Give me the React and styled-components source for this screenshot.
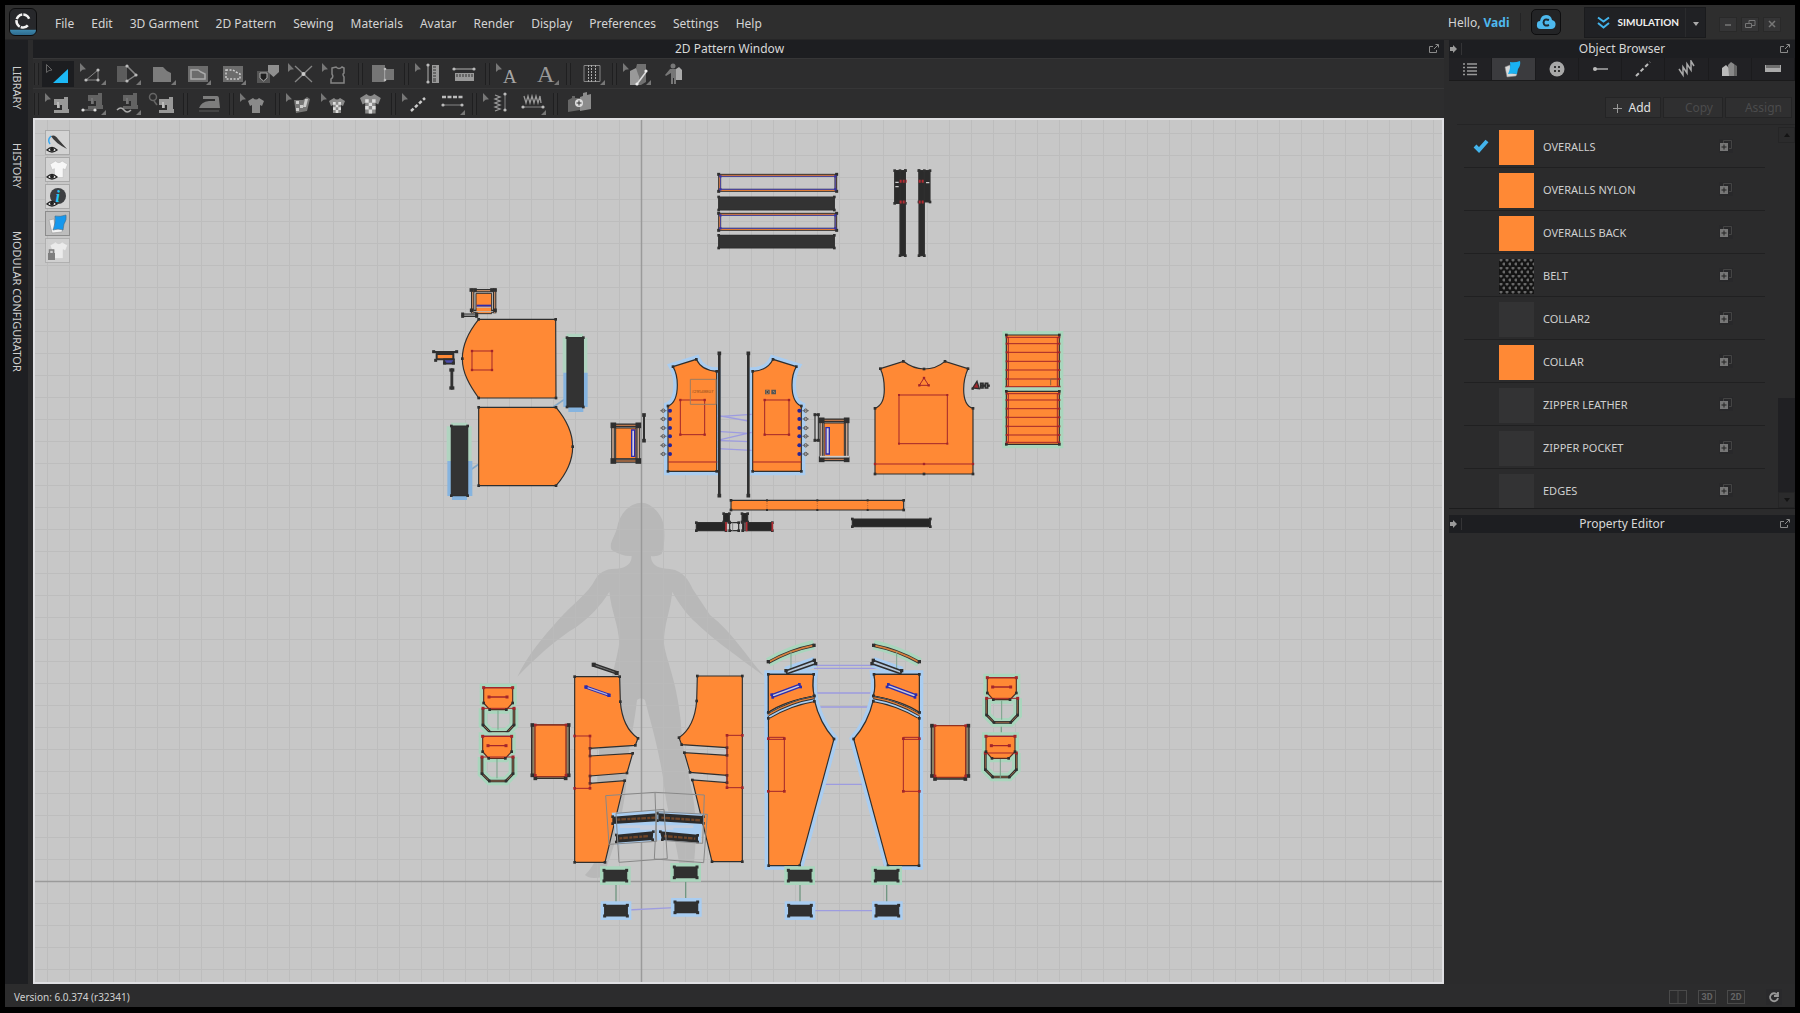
import React from "react";
import styled, { createGlobalStyle } from "styled-components";

const GlobalStyle = createGlobalStyle`
  * { box-sizing: border-box; }
  body { margin: 0; background: #000; }
  button { font: inherit; color: inherit; border: 0; padding: 0; background: none; }
  ul { list-style: none; margin: 0; padding: 0; }
`;

const Shell = styled.div`
  height: 100vh;
  min-height: 600px;
  padding: 5px 5px 6px;
  display: flex;
  flex-direction: column;
  background: #000;
  color: #d4d4d4;
  font: 12px/16px "Noto Sans", "Open Sans", sans-serif;
`;

const TopBar = styled.header`
  flex: 0 0 35px;
  display: flex;
  align-items: center;
  padding: 0 14px 0 4px;
  background: #2e2e2e;
  border-bottom: 1px solid #262627;
`;
const Logo = styled.div`
  width: 28px;
  height: 28px;
  border-radius: 6px;
  border: 1px solid #0c0c0d;
  background: linear-gradient(#27282b 78%, #3c86ab 82%, #2e6a8c);
  svg { display: block; }
`;
const Menu = styled.nav`
  display: flex;
  gap: 17px;
  margin-left: 18px;
  padding-top: 4px;
  button { white-space: nowrap; }
`;
const Greeting = styled.div`
  margin-left: auto;
  padding: 2px 11px 0 0;
  border-right: 1px solid #232324;
  b { color: #4fb9ee; }
`;
const CloudButton = styled.button`
  width: 30px;
  height: 26px;
  margin: 0 23px 0 10px;
  border: 1px solid #0e0e0f;
  border-radius: 5px;
  background: #232426;
  svg { display: block; margin: auto; }
`;
const Mode = styled.div`
  display: flex;
  height: 31px;
  margin-right: 13px;
  background: #202124;
  border: 1px solid #1a1b1d;
  font: 700 10px/16px Lato, sans-serif;
  color: #f0f0f0;
`;
const ModeButton = styled.button`
  display: flex;
  align-items: center;
  gap: 7px;
  padding: 0 6px 0 12px;
`;
const CaretButton = styled.button`
  width: 20px;
  border-left: 1px solid #2a2b2d;
`;
const WindowButtons = styled.div`
  display: flex;
  gap: 4px;
  margin-top: 4px;
`;
const WindowButton = styled.button`
  width: 18px;
  height: 15px;
  background: #353536;
  border: 1px solid #292929;
  svg { display: block; margin: auto; }
`;

const Main = styled.div`
  flex: 1;
  min-height: 0;
  display: grid;
  grid-template-columns: 23px minmax(0, 1fr) 346px;
  column-gap: 5px;
  background: #2b2b2c;
`;
const Rail = styled.aside`
  display: flex;
  flex-direction: column;
  align-items: center;
  background: #1e1f22;
  font-size: 11px;
  padding-top: 26px;
  gap: 33px;
  button { writing-mode: vertical-rl; white-space: nowrap; color: #cfcfcf; }
  button:last-child { margin-top: 10px; }
`;

const Column = styled.section`
  display: flex;
  flex-direction: column;
  min-width: 0;
  min-height: 0;
`;
const TitleBar = styled.div`
  flex: 0 0 18px;
  display: grid;
  grid-template-columns: 20px 1fr 16px;
  align-items: center;
  text-align: center;
  background: #1d1e21;
  color: #d8d8d8;
  h2 { margin: 0; padding-right: ${(p) => p.$shift || 4}px; font: inherit; }
  svg { display: block; }
`;
const ToolRow = styled.div`
  flex: 0 0 30px;
  display: flex;
  align-items: center;
  background: #2d2d2e;
  border-top: 1px solid #363637;
`;
const Divider = styled.i`
  width: 5px;
  height: 22px;
  margin: 0 ${(p) => (p.$edge ? 1 : 3)}px;
  border: 1px solid #1f1f20;
  border-width: 0 1px;
  background: #303031;
`;
const Tool = styled.button`
  width: 35px;
  height: 26px;
  display: flex;
  justify-content: center;
  align-items: center;
  svg { display: block; background: ${(p) => (p.$active ? "#1c1d20" : "none")}; }
`;

const Canvas = styled.div`
  flex: 1;
  min-height: 0;
  position: relative;
  overflow: hidden;
  border: 2px solid #dfdfe2;
  background: #c7c7c7;
  > svg { display: block; width: 100%; height: 100%; }
`;
const ViewTools = styled.div`
  position: absolute;
  left: 10px;
  top: 10px;
  display: grid;
  gap: 2px;
`;
const ViewTool = styled.button`
  width: 25px;
  height: 25px;
  background: ${(p) => (p.$on ? "#bdbdbd" : "#d3d3d3")};
  border: 1px solid ${(p) => (p.$on ? "#8c8c8c" : "#a9a9a9")};
  opacity: ${(p) => (p.$dim ? 0.75 : 1)};
  svg { display: block; }
`;

const Tabs = styled.div`
  flex: 0 0 23px;
  display: grid;
  grid-template-columns: repeat(8, 1fr);
  background: #212124;
  border-bottom: 1px solid #1a1a1b;
`;
const Tab = styled.button`
  display: flex;
  align-items: center;
  justify-content: center;
  border-right: 1px solid #1b1b1d;
  background: ${(p) => (p.$active ? "#3b3b3e" : "none")};
`;
const Actions = styled.div`
  flex: 0 0 44px;
  display: flex;
  justify-content: flex-end;
  gap: 2px;
  padding: 16px 3px 6px 0;
  margin-left: 8px;
  border-bottom: 1px solid #242425;
`;
const Action = styled.button`
  width: ${(p) => p.$w}px;
  display: flex;
  align-items: center;
  justify-content: flex-end;
  gap: 7px;
  padding: 1px ${(p) => p.$pad}px 0 0;
  border: 1px solid #242425;
  background: #2f2f30;
  color: #e2e2e2;
  &:disabled { color: #4b4b4c; }
`;
const Browser = styled.div`
  flex: 0 0 384px;
  display: flex;
  overflow: hidden;
  border-bottom: 1px solid #1c1c1d;
`;
const List = styled.ul`
  flex: 1;
  margin: 0 13px 0 15px;
`;
const Row = styled.li`
  height: 43px;
  display: grid;
  grid-template-columns: 35px 35px 1fr 46px;
  align-items: center;
  border-bottom: 1px solid #202021;
  font-size: 11px;
  color: #cfcfcf;
  > svg { margin-left: 9px; }
`;
const Swatch = styled.span`
  width: 35px;
  height: 35px;
  margin-top: 2px;
  background: ${(p) => p.$fill};
`;
const Name = styled.span`padding: 2px 0 0 9px;`;
const AddTo = styled.button`
  width: 14px;
  height: 14px;
  background: #28282a;
  svg { display: block; }
`;
const Scroll = styled.div`
  width: 17px;
  display: flex;
  flex-direction: column;
  padding: 2px 0 0;
  button { height: 16px; border: 1px solid #252526; }
  svg { display: block; margin: auto; }
`;
const Track = styled.div`
  flex: 1;
  display: flex;
  flex-direction: column;
  justify-content: flex-end;
`;
const Thumb = styled.div`
  height: 94px;
  background: #202023;
`;
const Gap = styled.div`flex: 0 0 6px;`;

const Status = styled.footer`
  flex: 0 0 23px;
  display: flex;
  align-items: center;
  gap: 11px;
  padding: 2px 13px 0 9px;
  background: #2c2c2d;
  font-size: 10px;
  color: #d0d0d0;
  span { margin-right: auto; }
`;
const StatusButton = styled.button`
  width: 18px;
  height: 14px;
  border: 1px solid #4a4a4a;
  font: 700 9px/12px Roboto, sans-serif;
  color: #666;
`;
const Refresh = styled.button`
  margin-left: 10px;
  width: 16px;
  height: 16px;
  background: #29292b;
  svg { display: block; margin: auto; }
`;

/* ---------- toolbar icons ---------- */

const G = "#858585";
const Cursor = ({ x = 3 }) => <path d={`M${x} 3v9l2.5-2.2 3.5-.6z`} fill="#777" />;
const More = () => <path d="M29 20v5h-5z" fill="#777" />;
const Dot = ({ x, y, r = 1.6, c = "#bbb" }) => <circle cx={x} cy={y} r={r} fill={c} />;
const Machine = ({ x = 0, y = 0, o = 1 }) => (
  <g transform={`translate(${x} ${y})`} opacity={o}>
    <path d="M0 2h10V0h4v12h1v4H0v-3h8V8H6v3H3V8H0z" fill="#999" />
    <path d="M4 5v6" stroke="#ddd" />
  </g>
);
const Shirt = ({ x = 0, y = 0, s = 1, check, fill = "#8a8a8a", ...rest }) => (
  <g transform={`translate(${x} ${y}) scale(${s})`}>
    <path d="M5 0Q8 3 11 0L16 3L14 8L12 7V15H4V7L2 8L0 3Z" fill={fill} {...rest} />
    {check && (
      <path d="M4 4h2.7v2.7H4zM9.3 4H12v2.7H9.3zM6.7 6.7h2.6v2.6H6.7zM4 9.3h2.7V12H4zM9.3 9.3H12V12H9.3zM6.7 12h2.6v3H6.7z" fill="#ddd" />
    )}
  </g>
);
const tools = {
  transform: <><path d="M4.500 4.500v8l2.500-2 3-.5z" fill="none" stroke="#666" /><path d="M26 9v14H11z" fill="#1cb8f5" /></>,
  edit: <><Cursor /><path d="M9 20L21 10V20Z" fill="none" stroke={G} /><Dot x={9} y={20} /><Dot x={21} y={10} /><Dot x={21} y={20} /><More /></>,
  polygon: <><path d="M5 6h10v16H5z" fill="#5c5c5c" /><path d="M15 6l9 9-9 6" stroke={G} fill="none" strokeWidth="1.500" /><Dot x={15} y={6} /><Dot x={24} y={15} /><Dot x={15} y={21} /><More /></>,
  shape: <><path d="M6 7h10l4 4 4 2v9H6z" fill="#7c7c7c" /><More /></>,
  inner: <><path d="M6 6h20v16H6z" fill="#6c6c6c" /><path d="M9 10h7l3 2 4 2v5H9z" fill="none" stroke="#aaa" strokeWidth="1.500" /><More /></>,
  dashed: <><path d="M6 6h20v16H6z" fill="#6c6c6c" /><path d="M9 10h7l3 2 4 2v5H9z" fill="none" stroke="#ccc" strokeWidth="1.500" strokeDasharray="2 1.500" /><More /></>,
  pocket: <><path d="M5 11h13v12H5z" fill="#555" /><path d="M8 13h7v5l-3.500 3L8 18z" fill="#1f1f1f" stroke="#aaa" /><path d="M16 5h11v7l-5.500 5L16 12z" fill="#8f8f8f" /></>,
  cut: <><Cursor x={1} /><path d="M8 6l17 16M25 6L8 22" stroke={G} strokeWidth="1.300" /><Dot x={16.5} y={14} r={2} c="#ccc" /></>,
  trace: <><Cursor x={0} /><path d="M10 8l4-1q3 3 6 0l2 1v5q-2 1 0 4v6H9v-4q3-2 1-5z" fill="none" stroke={G} strokeWidth="1.500" /></>,
  flatten: <><path d="M4 5h13v17H4zM18 9h8v11h-8z" fill="#757575" /><path d="M17 9v12" stroke="#ccc" /><Dot x={17} y={9} r={1.3} /><Dot x={17} y={20} r={1.3} /></>,
  measureV: <><Cursor x={1} /><path d="M14 6v16" stroke={G} strokeWidth="1.500" /><Dot x={14} y={5} /><Dot x={14} y={22} /><path d="M18 5h7v18h-7z" fill="#9a9a9a" /><path d="M19 7h3M19 10h3M19 13h3M19 16h3M19 19h3M19 21h3" stroke="#333" /></>,
  measureH: <><path d="M5 9h20" stroke={G} strokeWidth="1.500" /><Dot x={5} y={9} /><Dot x={25} y={9} /><path d="M6 13h19v8H6z" fill="#9a9a9a" /><path d="M8 14v3M11 14v3M14 14v3M17 14v3M20 14v3M23 14v3" stroke="#333" /></>,
  textEdit: <><Cursor x={1} /><text x="8" y="23" fontSize="19" fontFamily="Liberation Serif, serif" fill="#a5a5a5">A</text></>,
  text: <><text x="7" y="22" fontSize="24" fontFamily="Liberation Serif, serif" fill="#999">A</text><More /></>,
  pleat: <><path d="M8 5.500h16v16H8z" fill="none" stroke={G} /><path d="M12.500 5v17M15.500 5v17M19.500 5v17" stroke="#aaa" strokeDasharray="2 1" /><More /></>,
  fold: <><Cursor x={1} /><path d="M8 11l6-3 4 3v14H8z" fill="#999" /><path d="M14 8l1-4h9v18l-5 3h-4q4-6 1-11z" fill="#707070" /><path d="M15 24L24 12" stroke="#ddd" strokeWidth="1.500" /><Dot x={15} y={24} c="#eee" /><Dot x={24} y={11} c="#eee" /><More /></>,
  avatar: <><circle cx="16" cy="6" r="2.500" fill="#777" /><path d="M13 9h6l6 8-1 1-5-5v11h-2v-6h-1v6h-2V13l-5 3-1-1z" fill="#777" /><path d="M19 9l3-2 3 3v10h-6z" fill="#aaa" /></>,
  segment: <><Cursor /><Machine x={12} y={7} /></>,
  sewLine: <><Machine x={11} y={3} o={0.5} /><path d="M6 20h12" stroke={G} /><Dot x={6} y={20} c="#ddd" /><Dot x={18} y={20} c="#ddd" /><More /></>,
  sewFree: <><Machine x={11} y={3} o={0.5} /><path d="M5 20q4-4 7 0t7 0" stroke="#aaa" fill="none" strokeWidth="1.500" /><More /></>,
  sewCheck: <><circle cx="6" cy="7" r="3.500" fill="none" stroke="#666" strokeWidth="1.500" /><path d="M7 11l3 4" stroke="#666" strokeWidth="1.500" /><Machine x={12} y={7} /></>,
  iron: <><path d="M10 6h14q2 0 2 3l1 9H6q2-6 10-7h6v-2H10z" fill="#7d7d7d" /><path d="M6 20h20v2H6z" fill="#444" /></>,
  shirt: <><Cursor x={1} /><Shirt x={9} y={8} /></>,
  textureRoll: <><Cursor x={1} /><path d="M9 10h9l4-3 3 2-3 12-11 2z" fill="#777" /><path d="M11 11h3v3h-3zM15 15h3v3h-3zM11 18h3v3h-3zM20 9h3l-2 8h-3z" fill="#ccc" /></>,
  textureShirt: <><Cursor x={1} /><Shirt x={9} y={8} check /></>,
  textureBig: <Shirt x={5} y={4} s={1.3} check />,
  topEdit: <><Cursor x={1} /><path d="M10 21L24 8" stroke="#ccc" strokeWidth="2.500" strokeDasharray="3.500 2" /></>,
  topLine: <><path d="M6 7h22" stroke="#bbb" strokeWidth="2.500" strokeDasharray="4 1.500" /><path d="M7 15h19" stroke={G} /><Dot x={7} y={15} /><Dot x={26} y={15} /><More /></>,
  puckerEdit: <><Cursor x={1} /><path d="M13 5l5 2-5 2 5 2-5 2 5 2-5 2 5 2-5 2" fill="none" stroke="#999" strokeWidth="1.300" /><path d="M23 4v16" stroke={G} /><Dot x={23} y={4} /><Dot x={23} y={20} /></>,
  pucker: <><path d="M7 6l2 7 2-7 2 7 2-7 2 7 2-7 2 7 2-7 1 7" fill="none" stroke="#999" strokeWidth="1.300" /><path d="M6 17h20" stroke={G} /><Dot x={6} y={17} /><Dot x={26} y={17} /><More /></>,
  addPiece: <><path d="M5 10l4-2v-2h3v2h5v12l-12 2z" fill="#666" /><path d="M17 7l3-1V3l4-1v3l4-1v15l-11 2z" fill="#8c8c8c" /><circle cx="16" cy="13" r="4" fill="#ddd" /><path d="M13.500 13h5M16 10.500v5" stroke="#333" /></>,
};
const firstRow = ["transform", "edit", "polygon", "shape", "inner", "dashed", "pocket", "cut", "trace", "|", "flatten", "|", "measureV", "measureH", "|", "textEdit", "text", "|", "pleat", "|", "fold", "avatar"];
const secondRow = ["segment", "sewLine", "sewFree", "sewCheck", "|", "iron", "|", "shirt", "|", "textureRoll", "textureShirt", "textureBig", "|", "topEdit", "topLine", "|", "puckerEdit", "pucker", "|", "addPiece"];

const Toolbar = ({ items, active }) => (
  <ToolRow role="toolbar">
    <Divider $edge />
    {items.map((id, i) =>
      id === "|" ? <Divider key={i} /> : (
        <Tool key={id} aria-label={id} $active={id === active}>
          <svg width="32" height="26" viewBox="0 1 32 26">{tools[id]}</svg>
        </Tool>
      )
    )}
  </ToolRow>
);

const PopOut = () => (
  <svg width="12" height="12" viewBox="0 0 12 12" fill="none" stroke="#8a8a8a"><path d="M5 3.500H1.500v6h7V7M6 6l4-4M7.500 1.500h3v3" /></svg>
);
const Dock = () => (
  <svg width="14" height="12" viewBox="0 0 14 12"><path d="M1 4h3V2l4 4-4 4V8H1z" fill="#9a9a9a" /><path d="M12.500 0v12" stroke="#343436" /></svg>
);
const FabricIcon = ({ s = 18 }) => (
  <svg width={s} height={s} viewBox="0 0 18 18"><path d="M1 7l5-2 1 8 6 1-1 2-9 1z" fill="#d8d8d8" stroke="#888" strokeWidth=".5" /><path d="M6 2Q11 3 16 1Q17 5 14 9L13 14Q9 13 4 14Q7 8 6 2Z" fill="#19b2f2" /></svg>
);
const tabIcons = [
  ["List", <svg width="16" height="14" stroke="#999" strokeWidth="1.500"><path d="M1 2h2M5 2h10M1 5.500h2M5 5.500h10M1 9h2M5 9h10M1 12.500h2M5 12.500h10" /></svg>],
  ["Fabric", <FabricIcon />],
  ["Button", <svg width="16" height="16"><circle cx="8" cy="8" r="7.500" fill="#a8a8a8" /><path d="M5 5h2v2H5zM9 5h2v2H9zM5 9h2v2H5zM9 9h2v2H9z" fill="#333" /></svg>],
  ["Buttonhole", <svg width="16" height="6"><path d="M2 3h14" stroke="#aaa" strokeWidth="1.500" /><circle cx="3" cy="3" r="2" fill="#bbb" /></svg>],
  ["Topstitch", <svg width="16" height="16"><path d="M1 15L15 1" stroke="#bbb" strokeWidth="2" strokeDasharray="4 2.500" /></svg>],
  ["Puckering", <svg width="18" height="18" fill="none" stroke="#aaa" strokeWidth="1.500"><path d="M2 9l4 6V7l4 6V4l4 6V1l3 5" /></svg>],
  ["Folding", <svg width="16" height="16"><path d="M0 7l4-3 3 3v8H0z" fill="#bbb" /><path d="M6 4l3-3 3 2v12H7z" fill="#888" /><path d="M12 3l3 2v10h-3z" fill="#666" /></svg>],
  ["Measure", <svg width="16" height="8"><path d="M0 0h16v7H0z" fill="#aaa" /><path d="M2 0v3M4 0v3M6 0v3M8 0v3M10 0v3M12 0v3M14 0v3" stroke="#333" /></svg>],
];

/* ---------- pattern drawing ---------- */

const ORANGE = "#ff8935";
const INK = "#2f2f2f";
const RED = "#a3252b";
const BLUE = "#a9cdf1";
const GREEN = "#a9d6bd";
const LILAC = "#9d9ce0";

const Sheet = ({ at, children }) => (
  <g transform={`translate(${at[0]} ${at[1]}) scale(0.33333)`}>{children}</g>
);
const Dots = ({ pts, c = INK, s = 8 }) => pts.map(([x, y], i) => (
  <rect key={i} x={x - s / 2} y={y - s / 2} width={s} height={s} fill={c} />
));
const Piece = ({ d, fill = ORANGE, line = INK, halo, w = 3.5, pts }) => (
  <>
    {halo && <path d={d} fill="none" stroke={halo} strokeWidth="24" />}
    <path d={d} fill={fill} stroke={line} strokeWidth={w} />
    {pts && <Dots pts={pts} c={line} />}
  </>
);
const Box = ({ x, y, r, b, fill = ORANGE, line = INK, halo, w, s = 8 }) => (
  <>
    <Piece d={`M${x} ${y}H${r}V${b}H${x}Z`} fill={fill} line={line} halo={halo} w={w} />
    <Dots pts={[[x, y], [r, y], [r, b], [x, b]]} c={line} s={s} />
  </>
);
const FrontVest = () => (
  <Piece halo={BLUE} d="M219 80L289 58Q305 92 350 94V394H204V198C225 190 232 165 232 135C232 110 226 92 219 80Z"
    pts={[[219, 80], [289, 58], [350, 94], [350, 394], [204, 394], [204, 198]]} />
);
const Rod = ({ x, y1, y2, w = 6 }) => (
  <>
    <path d={`M${x} ${y1}V${y2}`} stroke={INK} strokeWidth={w} />
    <Dots pts={[[x, y1], [x, y2]]} s={11} />
  </>
);
const PocketUnit = ({ x, y, h = 112 }) => (
  <g transform={`translate(${x} ${y})`}>
    <path d={`M0 5H88M0 ${h}H88M6 0V${h + 6}M82 0V${h + 6}`} stroke={INK} strokeWidth="11" />
    <path d={`M0 5H88M0 ${h}H88`} stroke="#b9754a" strokeWidth="4" />
    <path d={`M6 0V${h + 6}M82 0V${h + 6}`} stroke="#c5a58f" strokeWidth="5" />
    <path d={`M14 13H75V${h - 7}H14Z`} fill={ORANGE} stroke={INK} strokeWidth="3" />
    <Dots pts={[[7, 5], [82, 5], [7, h], [82, h]]} s={17} />
  </g>
);
const TrouserFront = () => (
  <>
    <path d="M85 97Q150 60 222 44" fill="none" stroke={GREEN} strokeWidth="28" />
    <path d="M138 126L225 96" stroke={BLUE} strokeWidth="32" />
    <Piece halo={BLUE} d="M85 133H221Q215 170 223 210C235 262 258 300 282 327L179 707H86Z" />
    <Piece d="M85 133H221Q215 170 223 198C170 207 120 222 85 247Z" pts={[[85, 133], [221, 133], [222, 198], [85, 247]]} />
    <path d="M85 257Q150 218 223 206" fill="none" stroke={INK} strokeWidth="20" />
    <path d="M85 257Q150 218 223 206" fill="none" stroke={BLUE} strokeWidth="14" />
    <path d="M85 254Q150 215 223 203" fill="none" stroke={INK} strokeWidth="9" />
    <path d="M85 254Q150 215 223 203" fill="none" stroke="#e5823a" strokeWidth="4" />
    <path d="M95 194L178 163L182 171L98 202Z" fill="#cacad8" stroke="#2c2cae" strokeWidth="4" />
    <Dots c="#2c2cae" pts={[[95, 194], [178, 163], [182, 171], [98, 202]]} />
    <Dots pts={[[85, 247], [85, 265], [223, 198], [223, 214], [282, 327], [179, 707], [86, 707]]} />
    <path d="M85 97Q150 60 222 46" fill="none" stroke={INK} strokeWidth="10" />
    <path d="M85 97Q150 60 222 46" fill="none" stroke="#d5803f" strokeWidth="5" />
    <path d="M153 65V120" stroke="#7ea591" strokeWidth="3" />
    <path d="M138 122L223 91L227 101L141 131Z" fill="#b5c6d8" stroke={INK} strokeWidth="5" />
    <Dots pts={[[85, 95], [222, 46], [138, 122], [223, 91], [227, 101]]} s={10} />
    <path d="M85 322H133V484H85M85 328H133" fill="none" stroke={RED} strokeWidth="3" />
    <Dots c={RED} pts={[[85, 326], [133, 326], [133, 484], [85, 484]]} />
  </>
);
const TrouserBack = () => (
  <>
    <Piece d="M344 140H479L481 215C485 265 505 305 534 325L526 346L390 355V378L518 370L501 429L390 438V460L494 452L435 697H344Z"
      pts={[[344, 140], [479, 140], [481, 215], [534, 325], [526, 346], [390, 355], [390, 378], [518, 370], [501, 429], [390, 438], [390, 460], [494, 452], [435, 697], [344, 697]]} />
    <path d="M344 318H390V475H344" fill="none" stroke={RED} strokeWidth="3" />
    <Dots c={RED} pts={[[344, 318], [390, 318], [390, 475], [344, 475]]} />
  </>
);
const Flap = ({ x, y, drop = 0 }) => (
  <g transform={`translate(${x} ${y})`}>
    <g transform={`translate(0 ${drop})`}>
      <path d="M0 66V116L22 138H72L93 116V66" fill="none" stroke={GREEN} strokeWidth="26" />
    </g>
    <Piece halo={GREEN} d="M2 4H89V50L70 70H20L2 50Z" line="#5a2b20" />
    <g transform={`translate(0 ${drop})`}>
      <path d="M0 66V116L22 138H72L93 116V66" fill="none" stroke={INK} strokeWidth="8" />
      <path d="M0 70V116L22 138H72L93 116V70" fill="none" stroke="#c77f50" strokeWidth="2" />
      <path d="M0 66H93" stroke={RED} strokeWidth="3" />
      <Dots pts={[[0, 116], [22, 138], [72, 138], [93, 116]]} />
      <Dots c={RED} s={9} pts={[[0, 66], [93, 66]]} />
    </g>
    <path d="M18 32H72M2 4H89" stroke={RED} strokeWidth="4" />
    <path d="M45 72V130" stroke="#78a38a" strokeWidth="3" />
    <Dots pts={[[2, 50], [89, 50], [20, 70], [70, 70]]} />
    <Dots c={RED} s={9} pts={[[2, 4], [89, 4], [18, 32], [72, 32]]} />
  </g>
);
const SidePocket = ({ x, y }) => (
  <g transform={`translate(${x} ${y})`}>
    <path d="M0 2H113V154H102V162H11V154H0Z" fill="#8b8066" stroke={INK} strokeWidth="4" />
    <path d="M10 2H103V157H10Z" fill={ORANGE} stroke="#933220" strokeWidth="4" />
    <Dots s={11} pts={[[2, 2], [111, 2], [2, 153], [111, 153], [11, 162], [102, 162]]} />
    <Dots c={RED} pts={[[11, 2], [103, 2], [11, 153], [103, 153]]} />
  </g>
);
const Cuff = ({ x, y, halo }) => (
  <Box x={x} y={y} r={x + 68} b={y + 32} fill="#303030" halo={halo} s={9} />
);
const HemBand = ({ y, h }) => (
  <>
    <path d={`M56 ${y}H410V${y + h}H56Z M62 ${y + 6}V${y + h - 6}H405V${y + 6}Z`} fillRule="evenodd" fill={ORANGE} stroke={INK} strokeWidth="3" />
    <path d={`M61 ${y + 6}H406V${y + h - 6}H61Z`} fill="none" stroke="#4b47ad" strokeWidth="3" />
    <Dots s={9} pts={[[56, y], [410, y], [56, y + h], [410, y + h]]} />
    <Dots c="#3934a5" s={7} pts={[[61, y + 6], [406, y + 6], [61, y + h - 6], [406, y + h - 6]]} />
  </>
);
const Pleated = ({ y, lines }) => (
  <>
    <Box x={919} y={y} r={1078} b={y + 159} halo={GREEN} />
    <path d={`M925 ${y + 6}V${y + 155}M1072 ${y + 6}V${y + 155}` + lines.map((l) => `M919 ${l}H1078`).join("")} stroke={RED} strokeWidth="3" />
    <Dots c={RED} s={6} pts={lines.flatMap((l) => [[920, l], [1078, l]])} />
  </>
);

const PatternDrawing = () => (
  <svg viewBox="35 120 1407 862" preserveAspectRatio="xMidYMid slice" role="img" aria-label="2D pattern pieces">
    <defs>
      <pattern id="grid" x="641" y="881" width="22" height="22" patternUnits="userSpaceOnUse">
        <path d="M.5 0V22M0 .5H22" stroke="#bababa" />
      </pattern>
    </defs>
    <Sheet at={[480, 480]}>
      <path fill="#b8b8b8" d="M485 68C515 68 545 105 550 130C556 160 553 200 545 222Q530 231 513 228Q512 262 560 266C610 268 625 300 640 330L690 405C760 460 800 530 852 588C800 550 700 480 650 430C620 405 590 360 577 335C570 400 552 430 552 490C555 530 590 600 602 720C608 840 640 920 645 1000C650 1070 645 1120 640 1170L600 1170C590 1080 560 1000 550 900C535 800 510 720 495 660Q483 650 471 660C460 760 440 820 440 900C430 1000 410 1080 380 1160L370 1190Q330 1200 315 1185Q340 1160 350 1130C350 1000 350 900 360 780C365 660 400 600 418 490C415 430 395 400 388 335C360 380 330 410 290 440C230 475 160 540 112 590C140 530 190 470 235 420C280 370 325 340 345 300C355 280 375 265 410 266Q455 262 455 228Q430 231 395 210C385 190 405 170 412 140C420 100 450 68 485 68Z" />
    </Sheet>
    <rect x="0" y="0" width="1800" height="1100" fill="url(#grid)" opacity=".75" />
    <path d="M641.500 0V1100M0 881.500H1800" stroke="#9a9a9a" strokeWidth="1.500" />

    <Sheet at={[700, 150]}>
      <HemBand y={73} h={51} />
      <Box x={56} y={141} r={403} b={180} fill="#333" />
      <HemBand y={190} h={51} />
      <Box x={56} y={256} r={403} b={294} fill="#333" />
      <Box x={584} y={62} r={616} b={160} fill="#2b2b2b" />
      <Box x={600} y={62} r={616} b={317} fill="#2b2b2b" />
      <Box x={657} y={62} r={690} b={156} fill="#2b2b2b" />
      <Box x={657} y={62} r={673} b={317} fill="#2b2b2b" />
      <path d="M599 94H620M656 94H674M599 156H618M656 156H672" stroke="#b12c33" strokeWidth="9" strokeDasharray="6 3" />
      <path d="M586 97H596M586 110H596M678 98H688" stroke="#ccc" strokeWidth="4" />
      <Piece d="M541 656L610 634Q640 657 672 657Q708 657 735 634L804 656C795 676 791 695 791 718C791 748 800 770 819 775V972H525V775C545 768 553 745 553 718C553 692 549 672 541 656Z"
        pts={[[541, 656], [610, 634], [672, 657], [735, 634], [804, 656], [819, 775], [819, 972], [672, 972], [525, 972], [525, 775]]} />
      <path d="M525 942H819M672 684L658 706H686Z" stroke={RED} strokeWidth="3" fill="none" />
      <Box x={597} y={735} r={742} b={881} fill="none" line={RED} w={3} s={6} />
      <Dots c={RED} pts={[[525, 942], [672, 942], [819, 942], [672, 684], [658, 706], [686, 706]]} s={7} />
      <path d="M818 714L831 694L838 716Z" fill={RED} stroke={INK} strokeWidth="4" />
      <path d="M842 700h7v14h-7zM856 700h7v14h-7z" fill="#999" stroke={INK} strokeWidth="5" />
      <Dots pts={[[818, 716], [845, 707], [852, 707], [866, 707]]} s={7} />
      <Pleated y={555} lines={[562, 581, 607, 634, 660, 687, 710]} />
      <Pleated y={724} lines={[731, 750, 776, 802, 829, 855, 877]} />
      <path d="M1052 706V687H1070" stroke="#88603f" strokeWidth="3" fill="none" />
    </Sheet>

    <Sheet at={[420, 270]}>
      <path d="M153 62H229M153 124H229M158 56V130M224 56V130" stroke={INK} strokeWidth="10" />
      <path d="M153 62H229M158 56V130M224 56V130" stroke="#c08a64" strokeWidth="4" />
      <path d="M168 70H215V131H168Z" fill={ORANGE} stroke={INK} strokeWidth="3" />
      <path d="M170 107H213" stroke="#2c2cae" strokeWidth="6" />
      <path d="M170 112H213M153 125H229" stroke="#bbb" strokeWidth="3" />
      <Dots s={11} pts={[[154, 60], [225, 60], [155, 121], [225, 121], [216, 60], [165, 60]]} />
      <Box x={128} y={132} r={170} b={139} fill="#aaa" s={9} />
      <Piece d="M176 148H407L408 384H176C150 348 127 310 127 266C127 222 150 180 176 148Z"
        pts={[[176, 148], [407, 148], [408, 384], [176, 384], [127, 266]]} />
      <Box x={156} y={243} r={216} b={300} fill="none" line={RED} w={3} s={7} />
      <path d="M400 411L446 379M140 608L177 582" stroke="#84a7c6" strokeWidth="5" />
      <Piece d="M176 412H408C440 450 458 490 458 530C458 570 440 610 408 647H176Z"
        pts={[[176, 412], [408, 412], [458, 530], [408, 647], [176, 647]]} />
      <path d="M440 191H489V203H502V308H428V203H440Z" fill="#b0d4c0" />
      <path d="M430 308H503V411H490V426H445V411H430Z" fill="#86b4df" />
      <Box x={441} y={203} r={490} b={411} fill="#333" />
      <path d="M93 458H142V469H155V573H80V469H93Z" fill="#b0d4c0" />
      <path d="M82 573H157V678H141V690H96V678H82Z" fill="#86b4df" />
      <Box x={94} y={468} r={143} b={677} fill="#333" />
      <path d="M50 252H100V268H50Z" fill={ORANGE} stroke={INK} strokeWidth="6" />
      <path d="M38 246H114" stroke={INK} strokeWidth="6" />
      <path d="M72 268H102V281H72Z" fill="#4c4cb0" stroke={INK} strokeWidth="5" />
      <Dots s={9} pts={[[41, 245], [110, 245], [47, 271], [74, 279], [100, 279]]} />
      <Box x={93} y={300} r={98} b={354} fill="#333" s={10} />
    </Sheet>

    <Sheet at={[600, 340]}>
      <PocketUnit x={33} y={251} />
      <path d="M95 270H104V349H95Z" fill="#d7d0dd" stroke="#2c2cae" strokeWidth="4" />
      <Rod x={132} y1={225} y2={302} />
      <FrontVest />
      <g transform="translate(808 0) scale(-1 1)"><FrontVest /></g>
      <path d="M204 366H352M458 366H605" stroke={RED} strokeWidth="3" />
      <Box x={241} y={180} r={314} b={284} fill="none" line={RED} w={3} s={7} />
      <Box x={494} y={180} r={567} b={284} fill="none" line={RED} w={3} s={7} />
      <path d="M271 118H348V193H271Z" fill="none" stroke="#9b7b62" strokeWidth="3" />
      <text x="275" y="160" fontSize="13" fontFamily="Liberation Sans, sans-serif" fill="#8a4a20">#29548807</text>
      <path d="M495 149H509V163H495ZM514 149H528V163H514Z" fill="#555" />
      <path d="M499 152h5v8h-5zM519 153l6 5" stroke="#c9a37f" strokeWidth="2" />
      <path d="M352 230L455 223M352 226L445 243M352 274L445 280M352 301L455 277M352 301L445 305M352 326L455 331" stroke={LILAC} strokeWidth="4" />
      <Rod x={358} y1={40} y2={467} w={8} />
      <Rod x={445} y1={40} y2={467} w={8} />
      {[212, 237, 264, 289, 316, 342].map((y) => (
        <g key={y}>
          <circle cx="210" cy={y} r="6" fill="#242499" />
          <circle cx="598" cy={y} r="6" fill="#242499" />
          <circle cx="190" cy={y} r="5" fill="#c5c5c5" stroke="#555" strokeWidth="3" />
          <circle cx="617" cy={y} r="5" fill="#c5c5c5" stroke="#555" strokeWidth="3" />
          <path d={`M180 ${y}H200M607 ${y}H627`} stroke="#555" strokeWidth="2" />
        </g>
      ))}
      <Box x={645} y={224} r={655} b={301} fill="#ccc" s={9} />
      <PocketUnit x={658} y={236} h={122} />
      <path d="M660 350H748" stroke="#ccc" strokeWidth="5" />
      <path d="M678 263H688V342H678Z" fill="#d7d0dd" stroke="#2c2cae" strokeWidth="4" />
      <Box x={393} y={481} r={911} b={510} />
      <path d="M501 481V510M652 481V510M803 481V510" stroke="#a05a35" strokeWidth="2" strokeDasharray="4 3" />
      <Dots pts={[[501, 481], [652, 481], [803, 481], [501, 510], [652, 510], [803, 510]]} s={6} />
      <Box x={757} y={537} r={991} b={560} fill="#262626" />
      <Box x={289} y={548} r={378} b={572} fill="#262626" />
      <Box x={371} y={521} r={388} b={546} fill="#262626" />
      <Box x={389} y={548} r={416} b={572} fill="#ccc" />
      <Box x={426} y={521} r={443} b={546} fill="#262626" />
      <Box x={428} y={548} r={517} b={572} fill="#262626" />
      <path d="M398 548V572M435 548V572" stroke="#888" strokeWidth="3" />
      <path d="M378 546V574M440 546V574M517 546V574" stroke="#b12c33" strokeWidth="5" />
    </Sheet>

    <Sheet at={[460, 630]}>
      <Flap x={69} y={169} />
      <Flap x={66} y={315} />
      <SidePocket x={215} y={283} />
      <TrouserBack />
      <g transform="translate(1191 -2) scale(-1 1)"><TrouserBack /></g>
      <path d="M402 101L473 126L470 132L399 108Z" fill="#777" stroke={INK} strokeWidth="4" />
      <Dots pts={[[401, 104], [470, 129]]} s={12} />
      <path d="M378 168L450 193L447 199L375 174Z" fill="#aeb0df" stroke="#2c2cae" strokeWidth="3" />
      <Dots pts={[[378, 171], [447, 196]]} s={10} c="#2c2cae" />
      <path d="M455 548L590 542L735 552L725 590L722 640L600 630L470 645L465 600Z" fill={BLUE} />
      <path d="M480 590H700M540 595H640" stroke="#c4cddd" strokeWidth="8" />
      <path d="M457 560L592 550V574L457 582ZM595 550L730 558V582L595 574ZM468 614L580 604L578 630L468 638ZM600 604L714 614V638L606 630Z" fill="#2b2b2b" />
      <path d="M472 569L586 563M604 563L722 571M478 625L568 618M612 618L706 626" stroke="#6f4528" strokeWidth="7" strokeDasharray="9 3 14 4" />
      <Dots pts={[[458, 560], [458, 581], [592, 550], [592, 572], [730, 560], [730, 580], [469, 615], [469, 636], [580, 605], [578, 629], [601, 605], [607, 629], [713, 616], [713, 636]]} />
      <path d="M437 497L585 487L733 495L728 640L620 632M437 497L447 643L590 634L585 487M468 550L612 538L622 686L477 697ZM590 545L742 553L731 698L583 687Z" fill="none" stroke="#888" strokeWidth="3" />
      <path d="M468 757V818M677 745V807" stroke="#719782" strokeWidth="4" />
      <path d="M503 840L643 833" stroke={LILAC} strokeWidth="4" />
      <Cuff x={432} y={721} halo={GREEN} />
      <Cuff x={643} y={711} halo={GREEN} />
      <Cuff x={434} y={826} halo={BLUE} />
      <Cuff x={645} y={816} halo={BLUE} />
    </Sheet>

    <Sheet at={[740, 630]}>
      <path d="M222 106H460M222 115H460M222 189H400M232 231H392M240 463H382M215 842H408" stroke={LILAC} strokeWidth="4" />
      <TrouserFront />
      <g transform="translate(623 0) scale(-1 1)"><TrouserFront /></g>
      <SidePocket x={574} y={285} />
      <path d="M784 275V320" stroke="#78a38a" strokeWidth="4" />
      <Flap x={740} y={139} />
      <Flap x={736} y={315} drop={-12} />
      <path d="M180 754V822M440 754V822" stroke="#719782" strokeWidth="4" />
      <Cuff x={145} y={721} halo={GREEN} />
      <Cuff x={406} y={721} halo={GREEN} />
      <Cuff x={146} y={826} halo={BLUE} />
      <Cuff x={408} y={826} halo={BLUE} />
    </Sheet>
  </svg>
);

const Eye = () => (
  <g><path d="M1 19Q6 14 11 19Q6 23 1 19Z" fill="#eee" stroke="#222" strokeWidth="1.300" /><circle cx="6" cy="18.500" r="2" fill="#222" /></g>
);
const viewTools = [
  ["Show seamlines", <><path d="M4 13Q1 9 5 5" stroke="#3aa7ee" fill="none" strokeWidth="1.500" /><path d="M5 5Q9 3 12 8L21 18Q9 12 5 5Z" fill="#3b3b3b" /><Eye /></>],
  ["Show garment", <><Shirt x={4} y={3} s={1.1} fill="#f7f7f7" stroke="#bbb" strokeWidth=".5" /><Eye /></>],
  ["Show information", <><circle cx="12" cy="11" r="8" fill="#3d3f42" /><text x="9.500" y="17" fontSize="16" fontWeight="700" fontStyle="italic" fontFamily="Liberation Serif, serif" fill="#22c6f7">i</text><Eye /></>],
  ["Show fabric", <g transform="translate(2 2)"><path d="M1 6l5-1 1 10 8 0-1 3-10 1z" fill="#f2f2f2" stroke="#999" strokeWidth=".6" /><path d="M7 2Q12 3 18 1Q19 6 16 10L15 16Q10 14 5 16Q8 9 7 2Z" fill="#1598ee" stroke="#4a6d85" strokeWidth=".6" /></g>],
  ["Lock garment", <><Shirt x={4} y={3} s={1.1} fill="#f7f7f7" stroke="#ccc" strokeWidth=".5" /><path d="M2 14h7v7H2z" fill="#666" /><path d="M3.500 14v-3h4v3" fill="none" stroke="#666" strokeWidth="1.500" /></>],
];

const weave = "radial-gradient(circle at 2px 1px, #686868 1px, transparent 2px) 0 0 / 6px 8px, radial-gradient(circle at 5px 5px, #686868 1px, transparent 2px) 0 0 / 6px 8px, #141414";
const fabrics = [
  ["OVERALLS", ORANGE, true],
  ["OVERALLS NYLON", ORANGE],
  ["OVERALLS BACK", ORANGE],
  ["BELT", weave],
  ["COLLAR2", "#333334"],
  ["COLLAR", ORANGE],
  ["ZIPPER LEATHER", "#333334"],
  ["ZIPPER POCKET", "#333334"],
  ["EDGES", "#333334"],
];
const menus = ["File", "Edit", "3D Garment", "2D Pattern", "Sewing", "Materials", "Avatar", "Render", "Display", "Preferences", "Settings", "Help"];

export default function App() {
  return (
    <Shell>
      <GlobalStyle />
      <TopBar>
        <Logo>
          <svg width="26" height="26" fill="none"><circle cx="13" cy="12" r="6.500" stroke="#f2f2f2" strokeWidth="2.500" strokeDasharray="7.500 1 7.500 1 7.500 1 7.500 20" transform="rotate(42 13 12)" /></svg>
        </Logo>
        <Menu>{menus.map((m) => <button key={m}>{m}</button>)}</Menu>
        <Greeting>Hello, <b>Vadi</b></Greeting>
        <CloudButton aria-label="Cloud">
          <svg width="22" height="18" viewBox="0 0 22 18"><path d="M6 16Q1 16 2 11Q2 8 5 8Q6 2 11 2Q16 2 17 7Q21 8 20.500 12Q20 16 16 16Z" fill="#4db9ee" /><path d="M14 7Q9 5 8.500 9.500Q9 14 14 12" fill="none" stroke="#1d2a33" strokeWidth="2" /></svg>
        </CloudButton>
        <Mode>
          <ModeButton>
            <svg width="13" height="13" fill="none" stroke="#43b4ec" strokeWidth="2"><path d="M1 1.500l5.500 4 5.500-4M1 7l5.500 4.500L12 7" /></svg>
            SIMULATION
          </ModeButton>
          <CaretButton aria-label="Choose mode"><svg width="6" height="4"><path d="M0 0h6L3 4z" fill="#aaa" /></svg></CaretButton>
        </Mode>
        <WindowButtons>
          <WindowButton aria-label="Minimize"><svg width="10" height="10" stroke="#777" strokeWidth="1.500"><path d="M2 6h6" /></svg></WindowButton>
          <WindowButton aria-label="Restore"><svg width="12" height="10" fill="none" stroke="#777"><path d="M5 4V1.500h6v5H8M1.500 4.500h6v4h-6z" /></svg></WindowButton>
          <WindowButton aria-label="Close"><svg width="10" height="10" stroke="#777" strokeWidth="1.500"><path d="M2 2l6 6M8 2L2 8" /></svg></WindowButton>
        </WindowButtons>
      </TopBar>

      <Main>
        <Rail>
          <button>LIBRARY</button>
          <button>HISTORY</button>
          <button>MODULAR CONFIGURATOR</button>
        </Rail>

        <Column>
          <TitleBar $shift={22}><span /><h2>2D Pattern Window</h2><PopOut /></TitleBar>
          <Toolbar items={firstRow} active="transform" />
          <Toolbar items={secondRow} />
          <Canvas>
            <PatternDrawing />
            <ViewTools>
              {viewTools.map(([label, art], i) => (
                <ViewTool key={label} aria-label={label} $on={i === 3} $dim={i === 4}>
                  <svg width="23" height="23">{art}</svg>
                </ViewTool>
              ))}
            </ViewTools>
          </Canvas>
        </Column>

        <Column>
          <TitleBar><Dock /><h2>Object Browser</h2><PopOut /></TitleBar>
          <Tabs role="tablist">
            {tabIcons.map(([label, art], i) => (
              <Tab key={label} role="tab" aria-label={label} $active={i === 1}>{art}</Tab>
            ))}
          </Tabs>
          <Actions>
            <Action $w={56} $pad={9}><svg width="9" height="9" stroke="#999"><path d="M4.500 0v9M0 4.500h9" /></svg>Add</Action>
            <Action $w={60} $pad={9} disabled>Copy</Action>
            <Action $w={67} $pad={9} disabled>Assign</Action>
          </Actions>
          <Browser>
            <List>
              {fabrics.map(([name, fill, on]) => (
                <Row key={name}>
                  {on ? <svg width="16" height="14" fill="none" stroke="#43b4ec" strokeWidth="4"><path d="M2 7l4 4 8-9" /></svg> : <span />}
                  <Swatch $fill={fill} />
                  <Name>{name}</Name>
                  <AddTo aria-label={`Assign ${name}`}>
                    <svg width="14" height="14"><path d="M4.500 4V1.500h8v8H10" fill="none" stroke="#444" /><path d="M1 4h8v8H1z" fill="#777" /><path d="M5 5.500v5M2.500 8h5" stroke="#222" /></svg>
                  </AddTo>
                </Row>
              ))}
            </List>
            <Scroll>
              <button aria-label="Scroll up"><svg width="6" height="4"><path d="M0 4h6L3 0z" fill="#141414" /></svg></button>
              <Track><Thumb /></Track>
              <button aria-label="Scroll down"><svg width="6" height="4"><path d="M0 0h6L3 4z" fill="#141414" /></svg></button>
            </Scroll>
          </Browser>
          <Gap />
          <TitleBar><Dock /><h2>Property Editor</h2><PopOut /></TitleBar>
        </Column>
      </Main>

      <Status>
        <span>Version: 6.0.374 (r32341)</span>
        <StatusButton aria-label="Split view"><svg width="2" height="12"><path d="M1 0v12" stroke="#4a4a4a" /></svg></StatusButton>
        <StatusButton>3D</StatusButton>
        <StatusButton>2D</StatusButton>
        <Refresh aria-label="Reset layout"><svg width="12" height="12" fill="none" stroke="#999" strokeWidth="1.800"><path d="M9 3.500A4 4 0 1 0 10 7M10 1v4H6" /></svg></Refresh>
      </Status>
    </Shell>
  );
}
